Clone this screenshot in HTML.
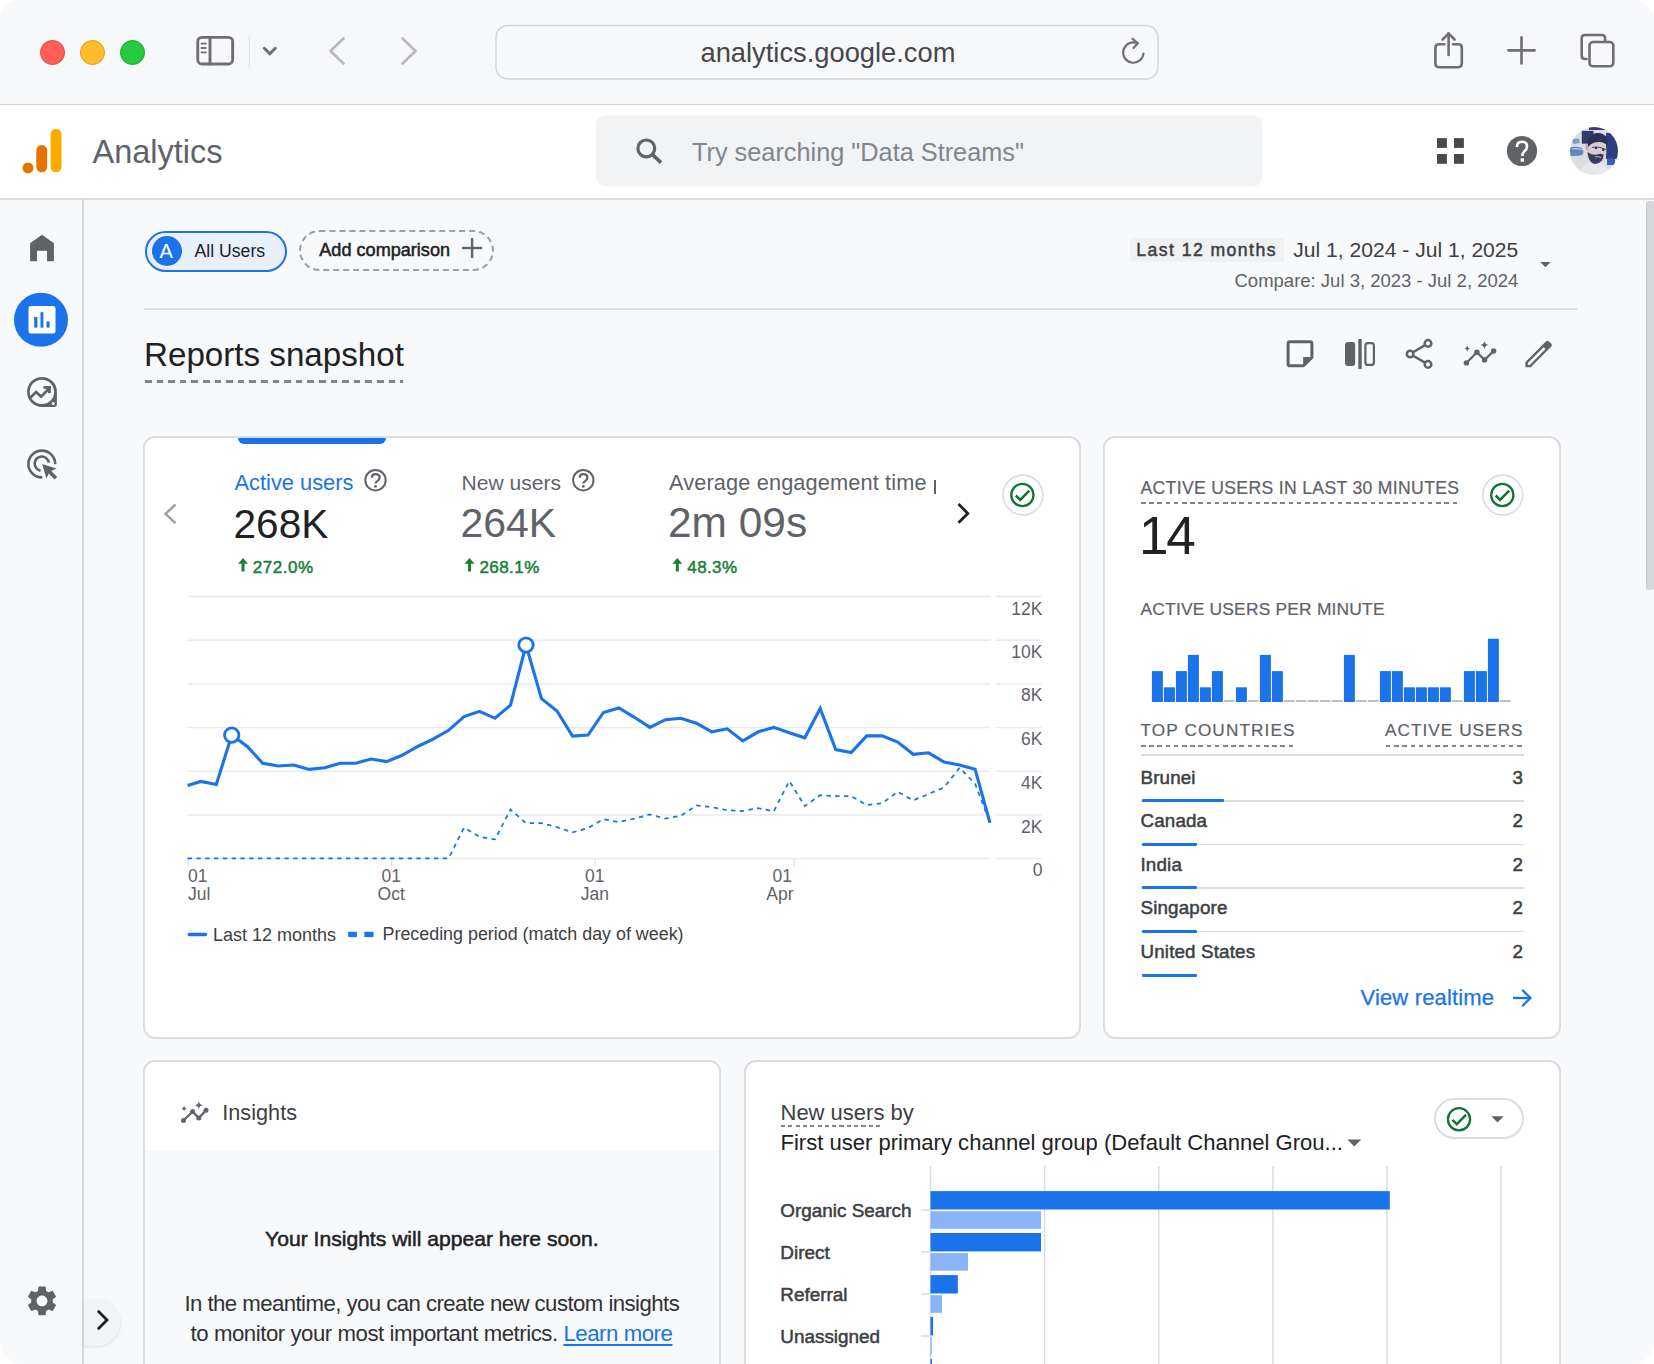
<!DOCTYPE html>
<html><head><meta charset="utf-8"><title>Analytics</title>
<style>
html,body{margin:0;padding:0;}
body{width:1654px;height:1364px;overflow:hidden;background:#ffffff;font-family:"Liberation Sans",sans-serif;position:relative;}
#win{position:absolute;left:0;top:0;width:1654px;height:1364px;border-radius:22px;overflow:hidden;background:#f8f9fa;}
.t{position:absolute;white-space:nowrap;}
svg{overflow:visible;}
</style></head><body>
<div id="win">
<div style="position:absolute;left:0px;top:0px;width:1654px;height:104px;background:#f7f8fa;"></div>
<div style="position:absolute;left:0px;top:104px;width:1654px;height:1px;background:#d4d5d8;"></div>
<div style="position:absolute;left:40px;top:40px;width:22.5px;height:22.5px;border-radius:50%;background:#ff5f57;border:0.75px solid #e2463f;"></div>
<div style="position:absolute;left:80px;top:40px;width:22.5px;height:22.5px;border-radius:50%;background:#febc2e;border:0.75px solid #e1a116;"></div>
<div style="position:absolute;left:120px;top:40px;width:22.5px;height:22.5px;border-radius:50%;background:#28c840;border:0.75px solid #12ac28;"></div>
<svg style="position:absolute;left:0;top:0" width="1654" height="104" viewBox="0 0 1654 104">
<g fill="none" stroke="#6e6e73" stroke-width="2.9" stroke-linecap="round" stroke-linejoin="round">
<rect x="197.75" y="37.35" width="34.9" height="26.7" rx="4.3"/>
<line x1="210" y1="37.5" x2="210" y2="64"/>
<line x1="201.5" y1="43.6" x2="205.8" y2="43.6" stroke-width="1.8"/>
<line x1="201.5" y1="48" x2="205.8" y2="48" stroke-width="1.8"/>
<line x1="201.5" y1="52.4" x2="205.8" y2="52.4" stroke-width="1.8"/>
<polyline points="264.3,48.3 269.8,53.8 275.3,48.3" stroke-width="3"/>
</g>
<line x1="249.3" y1="35" x2="249.3" y2="69" stroke="#e3e3e6" stroke-width="1.2"/>
<g fill="none" stroke="#b9b9bd" stroke-width="2.6" stroke-linecap="round" stroke-linejoin="round">
<polyline points="343.5,38.5 330.5,51 343.5,63.5"/>
<polyline points="402.5,38.5 415.5,51 402.5,63.5"/>
</g>
<rect x="496" y="25.5" width="662" height="53.5" rx="12" fill="#f7f8fa" stroke="#d3d4d7" stroke-width="1.5"/>
<g fill="none" stroke="#727276" stroke-width="2.2" stroke-linecap="round" stroke-linejoin="round">
<path d="M1143.5 53.5 A10.2 10.2 0 1 1 1137.5 43.2"/>
<polyline points="1132.5,38.8 1137.8,43.2 1133.5,48"/>
</g>
<g fill="none" stroke="#6e6e73" stroke-width="2.6" stroke-linecap="round" stroke-linejoin="round">
<path d="M1444.3 44.2 H1439 Q1435.4 44.2 1435.4 47.8 V63.6 Q1435.4 67.2 1439 67.2 H1458.2 Q1461.8 67.2 1461.8 63.6 V47.8 Q1461.8 44.2 1458.2 44.2 H1453"/>
<line x1="1448.6" y1="33.5" x2="1448.6" y2="55"/>
<polyline points="1442.5,39.6 1448.6,33.5 1454.7,39.6"/>
<line x1="1508.5" y1="50.4" x2="1534.5" y2="50.4"/>
<line x1="1521.5" y1="37.4" x2="1521.5" y2="63.4"/>
<path d="M1586.5 59 H1585 Q1581.7 59 1581.7 55.7 V38.3 Q1581.7 35 1585 35 H1601.8 Q1605.1 35 1605.1 38.3 V41.5"/>
<rect x="1589.5" y="42" width="23.8" height="24.3" rx="3.6"/>
</g>
</svg>
<div class="t" style="left:700.5px;top:38.69px;font-size:27.3px;line-height:27.3px;color:#47474a;">analytics.google.com</div>
<div style="position:absolute;left:0px;top:105px;width:1654px;height:93px;background:#ffffff;"></div>
<div style="position:absolute;left:0px;top:198px;width:1654px;height:1.5px;background:#dadce0;"></div>
<svg style="position:absolute;left:0;top:105px" width="1654" height="93" viewBox="0 105 1654 93">
<circle cx="28" cy="167.9" r="5.5" fill="#e37400"/>
<rect x="36.3" y="145" width="10.9" height="27.3" rx="5.45" fill="#e37400"/>
<rect x="50.6" y="128.8" width="10.9" height="43.5" rx="5.45" fill="#f9ab00"/>
<rect x="596" y="115.4" width="666" height="71" rx="9" fill="#f1f3f4"/>
<g fill="none" stroke="#5f6368" stroke-width="3.2" stroke-linecap="round">
<circle cx="646.3" cy="148.4" r="8.4"/>
<line x1="652.5" y1="154.6" x2="661" y2="162.6" stroke-linecap="butt" stroke-width="3.6"/>
</g>
<g fill="#474a4d">
<rect x="1437" y="138.1" width="9.9" height="9.8"/>
<rect x="1454" y="138.1" width="9.9" height="9.8"/>
<rect x="1437" y="154" width="9.9" height="9.8"/>
<rect x="1454" y="154" width="9.9" height="9.8"/>
</g>
<circle cx="1522" cy="151" r="15.1" fill="#5f6368"/>
<path d="M1516.9 147 Q1517 141.8 1522 141.8 Q1527 141.8 1527 146.4 Q1527 149 1524.6 151 Q1522.3 153 1522.3 156" fill="none" stroke="#fff" stroke-width="2.6"/>
<rect x="1520.6" y="158.3" width="3.4" height="3.4" fill="#fff"/>
</svg>
<div class="t" style="left:92.5px;top:136.49px;font-size:32.5px;line-height:32.5px;color:#5f6368;">Analytics</div>
<div class="t" style="left:692.0px;top:139.58px;font-size:25.3px;line-height:25.3px;color:#80868b;">Try searching "Data Streams"</div>
<svg style="position:absolute;left:1570px;top:127px" width="48" height="48" viewBox="0 0 48 48">
<defs><clipPath id="av"><circle cx="24" cy="24" r="24"/></clipPath>
<filter id="blur" x="-10%" y="-10%" width="120%" height="120%"><feGaussianBlur stdDeviation="0.7"/></filter></defs>
<g clip-path="url(#av)"><g filter="url(#blur)">
<rect x="-2" y="-2" width="52" height="52" fill="#dcdee3"/>
<rect x="19" y="-2" width="17" height="5" fill="#343d72"/>
<rect x="11.8" y="3.9" width="11.7" height="12.8" fill="#303a6c"/>
<rect x="36" y="5.9" width="13" height="26" fill="#2d3c80"/>
<rect x="37" y="32" width="8" height="6" fill="#3a5fb0"/>
<path d="M0 20.5 Q6 19 11.5 21 Q13.5 23 13.5 25 L12.5 28 Q8 29 0 29Z" fill="#6088c0"/>
<path d="M2 22 Q7 21 12 23" stroke="#b9c9e2" stroke-width="1.2" fill="none"/>
<path d="M1.5 12 L9 11.5 L10 16 L3 17Z" fill="#7f9bc8"/>
<path d="M10 48 Q12 38 20 35 L30 36 Q38 39 40 48Z" fill="#e6e8ec"/>
<path d="M16.5 24 Q16 15 24 14.5 Q33 14 36 19 Q37.5 27 34 33 Q30 37 25 36 Q18 34 16.5 24Z" fill="#d8cdca"/>
<path d="M15.4 17 Q17.8 16.8 18 20 L17.8 24 Q15.6 23.5 15.4 20Z" fill="#c9a9a8"/>
<path d="M17.8 18 Q17 9 25 6.3 Q34 5 37.5 12 Q38.5 16 37 18.5 Q34 14.5 28 15 Q21 15.5 18.5 20Z" fill="#2a3158"/>
<path d="M22 20.5 Q27 19 36 22.5" stroke="#4a4f70" stroke-width="1.1" fill="none"/>
<circle cx="26" cy="21" r="1.2" fill="#2a2f52"/><circle cx="33.2" cy="23" r="1.2" fill="#2a2f52"/>
<path d="M17.5 25 Q18 34 23 36.5 Q28 38 32 33.5 Q34 30 33.5 27.5 Q30 26 27 27.5 Q24 28 21 27 Q19 26 17.5 25Z" fill="#3b3e60"/>
<path d="M25 30 Q28 29 31 30.5" stroke="#cfc3c2" stroke-width="0.9" fill="none"/>
</g></g></svg>
<div style="position:absolute;left:82px;top:199px;width:2px;height:1165px;background:#d7d8db;"></div>
<svg style="position:absolute;left:0;top:199px" width="84" height="1165" viewBox="0 199 84 1165">
<path d="M30.1 261.3 V243.3 L42 234.7 L53.9 243.3 V261.3 H47 V250.8 H37 V261.3 Z" fill="#5f6368"/>
<circle cx="41" cy="319.8" r="27" fill="#1a73e8"/>
<rect x="28.5" y="306" width="27" height="27.5" rx="2.6" fill="#fff"/>
<rect x="34.2" y="316.9" width="3.2" height="10.7" fill="#1a73e8"/>
<rect x="40.5" y="312.2" width="2.9" height="15.4" fill="#1a73e8"/>
<rect x="46.5" y="321.4" width="3.1" height="6.2" fill="#1a73e8"/>
<path d="M27.1 391.9 A14.8 14.8 0 0 1 56.9 391.9 V404.2 Q56.9 406.9 54.2 406.9 H41.9 A14.8 14.8 0 0 1 27.1 391.9 Z" fill="#5f6368"/>
<circle cx="41.9" cy="391.9" r="12.2" fill="#f8f9fa"/>
<polyline points="30.3,397.8 36.1,392 41.1,396.6 48.6,389" fill="none" stroke="#5f6368" stroke-width="2.7"/>
<polygon points="43.4,386.2 50.6,386.2 50.6,393.1" fill="#5f6368"/>
<rect x="43.4" y="386.2" width="7.2" height="2.6" fill="#5f6368"/>
<rect x="48" y="386.2" width="2.6" height="6.9" fill="#5f6368"/>
<circle cx="53.2" cy="403.4" r="1.5" fill="#fff"/>
<g fill="none" stroke="#5f6368" stroke-width="2.6">
<path d="M55.2 464.3 A13.4 13.4 0 1 0 42.3 477.4"/>
<path d="M48.8 462.6 A7.1 7.1 0 1 0 40.6 470.6"/>
</g>
<path d="M42.2 464.1 L56.5 468.4 L51.3 471 L57.2 476.9 L54.6 479.5 L48.7 473.6 L46.4 478.6 Z" fill="#5f6368"/>
<path transform="translate(24 1282.9) scale(1.5)" fill="#5f6368" d="M19.14 12.94c.04-.3.06-.61.06-.94 0-.32-.02-.64-.07-.94l2.03-1.58c.18-.14.23-.41.12-.61l-1.92-3.32c-.12-.22-.37-.29-.59-.22l-2.39.96c-.5-.38-1.030-.7-1.62-.94l-.36-2.54c-.04-.24-.24-.41-.48-.41h-3.84c-.24 0-.43.17-.47.41l-.36 2.54c-.59.24-1.13.57-1.62.94l-2.39-.96c-.22-.08-.47 0-.59.22L2.74 8.87c-.12.21-.08.47.12.61l2.03 1.58c-.05.3-.09.63-.09.94s.02.64.07.94l-2.03 1.58c-.18.14-.23.41-.12.61l1.92 3.32c.12.22.37.29.59.22l2.39-.96c.5.38 1.03.7 1.62.94l.36 2.54c.05.24.24.41.48.41h3.840c.24 0 .44-.17.47-.41l.36-2.54c.59-.24 1.13-.56 1.62-.94l2.39.96c.22.08.47 0 .59-.22l1.92-3.32c.12-.22.07-.47-.12-.61l-2.01-1.58zM12 15.6c-1.98 0-3.6-1.62-3.6-3.6s1.62-3.6 3.6-3.6 3.6 1.62 3.6 3.6-1.62 3.6-3.6 3.6z"/>
</svg>
<div style="position:absolute;left:84px;top:1299px;width:36px;height:47px;background:#f1f3f4;border-radius:0 23px 23px 0;box-shadow:0 1px 3px rgba(60,64,67,0.15);"></div>
<svg style="position:absolute;left:84px;top:1299px" width="40" height="50" viewBox="84 1299 40 50">
<polyline points="97.8,1310.8 107,1320 97.8,1329.2" fill="none" stroke="#202124" stroke-width="2.8"/>
</svg>
<div style="position:absolute;left:144.5px;top:230.5px;width:138.5px;height:37px;border:2px solid #1a73e8;border-radius:21px;background:#e8f0fe;"></div>
<div style="position:absolute;left:152px;top:236px;width:30px;height:30px;border-radius:50%;background:#1a73e8;"></div>
<div class="t" style="left:159.5px;top:241.07px;font-size:20px;line-height:20px;color:#ffffff;">A</div>
<div class="t" style="left:194.5px;top:242.76px;font-size:17.65px;line-height:17.65px;color:#202124;">All Users</div>
<div style="position:absolute;left:299.3px;top:229.8px;width:191px;height:37.5px;border:2px dashed #9aa0a6;border-radius:21px;"></div>
<div class="t" style="left:319.3px;top:241.28px;font-size:18.1px;line-height:18.1px;color:#202124;-webkit-text-stroke:0.5px #202124;">Add comparison</div>
<svg style="position:absolute;left:455px;top:232px" width="36" height="36" viewBox="455 232 36 36">
<g stroke="#5f6368" stroke-width="2.4"><line x1="462" y1="248" x2="482.2" y2="248"/><line x1="472.1" y1="238" x2="472.1" y2="258"/></g></svg>
<div style="position:absolute;left:1130px;top:237.8px;width:153.5px;height:24px;background:#f0f1f3;border-radius:2px;"></div>
<div class="t" style="left:1136.3px;top:242.00px;font-size:17.6px;line-height:17.6px;color:#3c4043;-webkit-text-stroke:0.5px #3c4043;letter-spacing:1.45px;">Last 12 months</div>
<div class="t" style="left:1293.3px;top:238.96px;font-size:21.08px;line-height:21.08px;color:#3c4043;">Jul 1, 2024 - Jul 1, 2025</div>
<div class="t" style="left:1234.5px;top:272.03px;font-size:18.51px;line-height:18.51px;color:#5f6368;">Compare: Jul 3, 2023 - Jul 2, 2024</div>
<svg style="position:absolute;left:1535px;top:255px" width="20" height="16" viewBox="1535 255 20 16">
<polygon points="1540.2,262 1550.6,262 1545.4,267.2" fill="#5f6368"/></svg>
<div style="position:absolute;left:144px;top:308px;width:1433px;height:1.5px;background:#dadce0;"></div>
<div class="t" style="left:144.0px;top:337.92px;font-size:33.17px;line-height:33.17px;color:#202124;">Reports snapshot</div>
<div style="position:absolute;left:145px;top:380px;width:258px;height:2.5px;background:repeating-linear-gradient(90deg,#80868b 0 6.5px,transparent 6.5px 11.6px);"></div>
<svg style="position:absolute;left:1270px;top:330px" width="300" height="50" viewBox="1270 330 300 50">
<g fill="none" stroke="#5f6368" stroke-width="3" stroke-linejoin="round">
<path d="M1290 341.7 H1310 Q1311.9 341.7 1311.9 343.6 V357.5 L1303.5 365.8 H1290 Q1288.1 365.8 1288.1 363.9 V343.6 Q1288.1 341.7 1290 341.7 Z"/>
</g>
<polygon points="1303.2,357.1 1312.8,357.1 1303.2,366.7" fill="#5f6368"/>
<rect x="1345" y="342" width="10.2" height="24" rx="3" fill="#5f6368"/>
<rect x="1358.3" y="339" width="3.4" height="30" fill="#5f6368"/>
<rect x="1365.4" y="343.1" width="8.5" height="21.8" rx="2.5" fill="none" stroke="#5f6368" stroke-width="2.2"/>
<g stroke="#5f6368" stroke-width="2.5" fill="none">
<line x1="1428" y1="343.4" x2="1410.1" y2="354"/>
<line x1="1410.1" y1="354" x2="1428" y2="364.4"/>
<circle cx="1428" cy="343.4" r="3.3" fill="#f8f9fa"/>
<circle cx="1410.1" cy="354" r="3.3" fill="#f8f9fa"/>
<circle cx="1428" cy="364.4" r="3.3" fill="#f8f9fa"/>
</g>
<g fill="#5f6368">
<polyline points="1466.4,362.9 1476.9,352.3 1484.6,359.9 1493.6,351" fill="none" stroke="#5f6368" stroke-width="2.2"/>
<circle cx="1466.4" cy="362.9" r="2.7"/><circle cx="1476.9" cy="352.3" r="2.7"/><circle cx="1484.6" cy="359.9" r="2.7"/><circle cx="1493.6" cy="351" r="2.7"/>
<path d="M1484.4 341 Q1485 344.4 1488.4 345 Q1485 345.6 1484.4 349 Q1483.8 345.6 1480.4 345 Q1483.8 344.4 1484.4 341Z"/>
<path d="M1467.3 345.3 Q1467.7 348.2 1470.6 348.6 Q1467.7 349 1467.3 351.9 Q1466.9 349 1464 348.6 Q1466.9 348.2 1467.3 345.3Z"/>
</g>
<path transform="translate(1520.1 372.6) scale(0.0386)" fill="#5f6368" fill-rule="evenodd" d="M140-140v-135.38l527.62-527.39q9.07-8.24 20.03-12.73 10.97-4.5 23-4.5t23.3 4.27q11.28 4.27 19.970 13.58l48.85 49.46q9.31 8.69 13.27 20 3.96 11.31 3.96 22.62 0 12.07-4.12 23.03-4.12 10.97-13.11 20.04L275.38-140H140Z M200-200h50.46l409.46-409.46-50.46-50.46L200-250.46V-200Z"/>
</svg>
<div style="position:absolute;left:143px;top:436px;width:934px;height:599px;border:2px solid #dadce0;border-radius:12px;background:#fff;"></div>
<div style="position:absolute;left:238px;top:438px;width:148px;height:6px;background:#1a73e8;border-radius:0 0 6px 6px;"></div>
<div class="t" style="left:234.5px;top:471.50px;font-size:21.85px;line-height:21.85px;color:#1a73e8;">Active users</div>
<div class="t" style="left:461.5px;top:472.16px;font-size:21.07px;line-height:21.07px;color:#5f6368;">New users</div>
<div class="t" style="left:669.0px;top:471.57px;font-size:21.77px;line-height:21.77px;color:#5f6368;letter-spacing:0.12px;">Average engagement time</div>
<div style="position:absolute;left:934.2px;top:480px;width:2.1px;height:14px;background:#5f6368;"></div>
<div class="t" style="left:233.5px;top:503.64px;font-size:40.59px;line-height:40.59px;color:#202124;">268K</div>
<div class="t" style="left:460.5px;top:503.31px;font-size:40.98px;line-height:40.98px;color:#5f6368;">264K</div>
<div class="t" style="left:668.0px;top:502.07px;font-size:42.45px;line-height:42.45px;color:#5f6368;">2m 09s</div>
<div class="t" style="left:252.8px;top:559.01px;font-size:17px;line-height:17px;color:#188038;-webkit-text-stroke:0.5px #188038;letter-spacing:0.52px;">272.0%</div>
<div class="t" style="left:479.5px;top:559.01px;font-size:17px;line-height:17px;color:#188038;-webkit-text-stroke:0.5px #188038;letter-spacing:0.42px;">268.1%</div>
<div class="t" style="left:687.3px;top:559.01px;font-size:17px;line-height:17px;color:#188038;-webkit-text-stroke:0.5px #188038;letter-spacing:0.38px;">48.3%</div>
<svg style="position:absolute;left:143px;top:436px" width="940" height="603" viewBox="143 436 940 603">
<circle cx="375.5" cy="480.2" r="10.2" fill="none" stroke="#5f6368" stroke-width="2"/>
<path d="M371.9 477.59999999999997 Q372.1 474.2 375.5 474.2 Q379.6 474.2 379.6 477.59999999999997 Q379.6 479.9 377.1 481.4 Q375.5 482.4 375.5 483.59999999999997" fill="none" stroke="#5f6368" stroke-width="2.2"/>
<circle cx="375.5" cy="486.4" r="1.4" fill="#5f6368"/>
<circle cx="583.3" cy="480.2" r="10.2" fill="none" stroke="#5f6368" stroke-width="2"/>
<path d="M579.6999999999999 477.59999999999997 Q579.9 474.2 583.3 474.2 Q587.4 474.2 587.4 477.59999999999997 Q587.4 479.9 584.9 481.4 Q583.3 482.4 583.3 483.59999999999997" fill="none" stroke="#5f6368" stroke-width="2.2"/>
<circle cx="583.3" cy="486.4" r="1.4" fill="#5f6368"/>
<circle cx="1022.9" cy="495" r="19.9" fill="#fff" stroke="#dadce0" stroke-width="1.6"/><circle cx="1022.4" cy="495" r="11.1" fill="none" stroke="#137333" stroke-width="2.3"/>
<polyline points="1015.8,495.5 1020.1999999999999,499.9 1029.3,490.6" fill="none" stroke="#137333" stroke-width="2.5"/>
<polyline points="175.5,504.5 165.5,513.8 175.5,523.1" fill="none" stroke="#9aa0a6" stroke-width="2.4"/>
<polyline points="958.5,504 967.8,513.4 958.5,522.8" fill="none" stroke="#202124" stroke-width="2.8"/>
<polygon points="243,558 248,563.8 244.5,563.8 244.5,571.6 241.5,571.6 241.5,563.8 238,563.8" fill="#188038"/>
<polygon points="469.5,558 474.5,563.8 471.0,563.8 471.0,571.6 468.0,571.6 468.0,563.8 464.5,563.8" fill="#188038"/>
<polygon points="677.3,558 682.3,563.8 678.8,563.8 678.8,571.6 675.8,571.6 675.8,563.8 672.3,563.8" fill="#188038"/>
</svg>
<svg style="position:absolute;left:143px;top:436px" width="940" height="603" viewBox="143 436 940 603"><rect x="187.5" y="595.75" width="803" height="1.5" fill="#e8eaed"/><rect x="996" y="595.75" width="45.5" height="1.5" fill="#e8eaed"/><rect x="187.5" y="639.43" width="803" height="1.5" fill="#e8eaed"/><rect x="996" y="639.43" width="45.5" height="1.5" fill="#e8eaed"/><rect x="187.5" y="683.11" width="803" height="1.5" fill="#e8eaed"/><rect x="996" y="683.11" width="45.5" height="1.5" fill="#e8eaed"/><rect x="187.5" y="726.79" width="803" height="1.5" fill="#e8eaed"/><rect x="996" y="726.79" width="45.5" height="1.5" fill="#e8eaed"/><rect x="187.5" y="770.47" width="803" height="1.5" fill="#e8eaed"/><rect x="996" y="770.47" width="45.5" height="1.5" fill="#e8eaed"/><rect x="187.5" y="814.15" width="803" height="1.5" fill="#e8eaed"/><rect x="996" y="814.15" width="45.5" height="1.5" fill="#e8eaed"/><rect x="187.5" y="857.83" width="803" height="1.5" fill="#e8eaed"/><rect x="996" y="857.83" width="45.5" height="1.5" fill="#e8eaed"/><rect x="187.6" y="858.5" width="1.2" height="7.5" fill="#dadce0"/><rect x="391.1" y="858.5" width="1.2" height="7.5" fill="#dadce0"/><rect x="594.6" y="858.5" width="1.2" height="7.5" fill="#dadce0"/><rect x="793.6" y="858.5" width="1.2" height="7.5" fill="#dadce0"/><polyline points="187.6,858.3 200.8,858.3 216.3,858.3 231.8,858.3 247.3,858.3 262.7,858.3 278.2,858.3 293.7,858.3 309.2,858.3 324.7,858.3 340.2,858.3 355.7,858.3 371.1,858.3 386.6,858.3 402.1,858.3 417.6,858.3 433.1,858.3 448.6,858.3 464.1,827.5 479.5,836.8 495.0,839.4 510.5,809.5 526.0,823.2 541.5,823.2 557.0,827.1 572.5,832.4 588.0,828.0 603.4,819.2 618.9,822.1 634.4,818.6 649.9,814.5 665.4,818.6 680.9,815.8 696.4,805.4 711.8,807.1 727.3,810.3 742.8,811.0 758.3,808.2 773.8,811.3 789.3,781.0 804.8,806.1 820.2,795.2 835.7,796.1 851.2,796.1 866.7,805.1 882.2,803.3 897.7,791.7 913.2,800.4 928.6,793.9 944.1,787.4 959.6,767.8 975.1,783.7 990.0,822.9" fill="none" stroke="#1a73e8" stroke-width="1.75" stroke-dasharray="4.4 4.4"/><polyline points="187.6,785.4 200.8,781.4 216.3,784.5 231.8,735.1 247.3,746.5 262.7,763.2 278.2,766.0 293.7,765.0 309.2,769.4 324.7,767.8 340.2,763.2 355.7,763.2 371.1,759.0 386.6,761.6 402.1,755.3 417.6,746.5 433.1,739.1 448.6,730.3 464.1,716.6 479.5,711.3 495.0,718.3 510.5,705.1 526.0,645.0 541.5,698.6 557.0,711.0 572.5,736.1 588.0,735.1 603.4,712.5 618.9,707.9 634.4,717.3 649.9,727.4 665.4,719.7 680.9,718.3 696.4,723.2 711.8,731.8 727.3,728.8 742.8,740.9 758.3,731.8 773.8,727.4 789.3,732.7 804.8,737.8 820.2,708.5 835.7,749.6 851.2,752.5 866.7,735.9 882.2,735.9 897.7,742.1 913.2,754.3 928.6,752.8 944.1,762.0 959.6,764.9 975.1,769.2 990.0,822.9" fill="none" stroke="#1a73e8" stroke-width="3.1" stroke-linejoin="miter"/><circle cx="231.7" cy="735.1" r="7.2" fill="#fff" stroke="#1a73e8" stroke-width="2.8"/><circle cx="526" cy="645" r="7.2" fill="#fff" stroke="#1a73e8" stroke-width="2.8"/><line x1="189.2" y1="934.5" x2="205.5" y2="934.5" stroke="#1a73e8" stroke-width="3.4" stroke-linecap="round"/><rect x="348.2" y="931.8" width="8.7" height="5.3" fill="#1a73e8"/><rect x="364.3" y="931.8" width="9.2" height="5.3" fill="#1a73e8"/></svg>
<div class="t" style="right:611.5px;top:600.69px;font-size:17.5px;line-height:17.5px;color:#5f6368;">12K</div>
<div class="t" style="right:611.5px;top:643.89px;font-size:17.5px;line-height:17.5px;color:#5f6368;">10K</div>
<div class="t" style="right:611.5px;top:687.39px;font-size:17.5px;line-height:17.5px;color:#5f6368;">8K</div>
<div class="t" style="right:611.5px;top:731.39px;font-size:17.5px;line-height:17.5px;color:#5f6368;">6K</div>
<div class="t" style="right:611.5px;top:775.09px;font-size:17.5px;line-height:17.5px;color:#5f6368;">4K</div>
<div class="t" style="right:611.5px;top:819.09px;font-size:17.5px;line-height:17.5px;color:#5f6368;">2K</div>
<div class="t" style="right:611.5px;top:862.19px;font-size:17.5px;line-height:17.5px;color:#5f6368;">0</div>
<div class="t" style="left:188.0px;top:867.79px;font-size:17.5px;line-height:17.5px;color:#5f6368;">01</div>
<div class="t" style="left:188.0px;top:886.29px;font-size:17.5px;line-height:17.5px;color:#5f6368;">Jul</div>
<div class="t" style="left:-108.8px;width:1000px;text-align:center;top:867.79px;font-size:17.5px;line-height:17.5px;color:#5f6368;">01</div>
<div class="t" style="left:-108.8px;width:1000px;text-align:center;top:886.29px;font-size:17.5px;line-height:17.5px;color:#5f6368;">Oct</div>
<div class="t" style="left:94.8px;width:1000px;text-align:center;top:867.79px;font-size:17.5px;line-height:17.5px;color:#5f6368;">01</div>
<div class="t" style="left:94.8px;width:1000px;text-align:center;top:886.29px;font-size:17.5px;line-height:17.5px;color:#5f6368;">Jan</div>
<div class="t" style="right:862.0px;top:867.79px;font-size:17.5px;line-height:17.5px;color:#5f6368;">01</div>
<div class="t" style="right:860.5px;top:886.29px;font-size:17.5px;line-height:17.5px;color:#5f6368;">Apr</div>
<div class="t" style="left:213.0px;top:925.67px;font-size:17.99px;line-height:17.99px;color:#3c4043;">Last 12 months</div>
<div class="t" style="left:382.5px;top:925.76px;font-size:17.89px;line-height:17.89px;color:#3c4043;">Preceding period (match day of week)</div>
<div style="position:absolute;left:1103px;top:436px;width:454px;height:599px;border:2px solid #dadce0;border-radius:12px;background:#fff;"></div>
<div class="t" style="left:1140.5px;top:479.60px;font-size:17.6px;line-height:17.6px;color:#5f6368;-webkit-text-stroke:0.22px #5f6368;letter-spacing:0.33px;">ACTIVE USERS IN LAST 30 MINUTES</div>
<div style="position:absolute;left:1141px;top:502px;width:317px;height:2px;background:repeating-linear-gradient(90deg,#80868b 0 4.5px,transparent 4.5px 8.2px);"></div>
<div class="t" style="left:1139.0px;top:509.14px;font-size:53px;line-height:53px;color:#202124;letter-spacing:-2.2px;">14</div>
<div class="t" style="left:1140.5px;top:601.37px;font-size:17.4px;line-height:17.4px;color:#5f6368;-webkit-text-stroke:0.22px #5f6368;letter-spacing:0.2px;">ACTIVE USERS PER MINUTE</div>
<svg style="position:absolute;left:1103px;top:436px" width="460" height="603" viewBox="1103 436 460 603"><rect x="1151.9" y="671.1" width="11" height="30.9" fill="#1a73e8"/><rect x="1163.9" y="687.3" width="11" height="14.7" fill="#1a73e8"/><rect x="1175.9" y="671.1" width="11" height="30.9" fill="#1a73e8"/><rect x="1187.9" y="654.9" width="11" height="47.1" fill="#1a73e8"/><rect x="1199.9" y="687.3" width="11" height="14.7" fill="#1a73e8"/><rect x="1211.9" y="671.1" width="11" height="30.9" fill="#1a73e8"/><rect x="1223.9" y="700" width="10.8" height="2" fill="#bdc1c6"/><rect x="1235.9" y="687.3" width="11" height="14.7" fill="#1a73e8"/><rect x="1247.9" y="700" width="10.8" height="2" fill="#bdc1c6"/><rect x="1259.9" y="654.9" width="11" height="47.1" fill="#1a73e8"/><rect x="1271.9" y="671.1" width="11" height="30.9" fill="#1a73e8"/><rect x="1283.9" y="700" width="10.8" height="2" fill="#bdc1c6"/><rect x="1295.9" y="700" width="10.8" height="2" fill="#bdc1c6"/><rect x="1307.9" y="700" width="10.8" height="2" fill="#bdc1c6"/><rect x="1319.9" y="700" width="10.8" height="2" fill="#bdc1c6"/><rect x="1331.9" y="700" width="10.8" height="2" fill="#bdc1c6"/><rect x="1343.9" y="654.9" width="11" height="47.1" fill="#1a73e8"/><rect x="1355.9" y="700" width="10.8" height="2" fill="#bdc1c6"/><rect x="1367.9" y="700" width="10.8" height="2" fill="#bdc1c6"/><rect x="1379.9" y="671.1" width="11" height="30.9" fill="#1a73e8"/><rect x="1391.9" y="671.1" width="11" height="30.9" fill="#1a73e8"/><rect x="1403.9" y="687.3" width="11" height="14.7" fill="#1a73e8"/><rect x="1415.9" y="687.3" width="11" height="14.7" fill="#1a73e8"/><rect x="1427.9" y="687.3" width="11" height="14.7" fill="#1a73e8"/><rect x="1439.9" y="687.3" width="11" height="14.7" fill="#1a73e8"/><rect x="1451.9" y="700" width="10.8" height="2" fill="#bdc1c6"/><rect x="1463.9" y="671.1" width="11" height="30.9" fill="#1a73e8"/><rect x="1475.9" y="671.1" width="11" height="30.9" fill="#1a73e8"/><rect x="1487.9" y="638.7" width="11" height="63.3" fill="#1a73e8"/><rect x="1499.9" y="700" width="10.8" height="2" fill="#bdc1c6"/><circle cx="1502.8" cy="495" r="19.9" fill="#fff" stroke="#dadce0" stroke-width="1.6"/><circle cx="1502.3" cy="495" r="11.1" fill="none" stroke="#137333" stroke-width="2.3"/>
<polyline points="1495.7,495.5 1500.1,499.9 1509.2,490.6" fill="none" stroke="#137333" stroke-width="2.5"/></svg>
<div class="t" style="left:1140.5px;top:722.44px;font-size:17.2px;line-height:17.2px;color:#5f6368;-webkit-text-stroke:0.22px #5f6368;letter-spacing:1.1px;">TOP COUNTRIES</div>
<div class="t" style="right:130.4px;top:722.44px;font-size:17.2px;line-height:17.2px;color:#5f6368;-webkit-text-stroke:0.22px #5f6368;letter-spacing:1.05px;">ACTIVE USERS</div>
<div style="position:absolute;left:1141px;top:744.5px;width:155px;height:2px;background:repeating-linear-gradient(90deg,#80868b 0 4.5px,transparent 4.5px 8.2px);"></div>
<div style="position:absolute;left:1385.5px;top:744.5px;width:138px;height:2px;background:repeating-linear-gradient(90deg,#80868b 0 4.5px,transparent 4.5px 8.2px);"></div>
<div style="position:absolute;left:1141px;top:754px;width:383px;height:1.5px;background:#dadce0;"></div>
<div class="t" style="left:1140.5px;top:768.79px;font-size:18.8px;line-height:18.8px;color:#3c4043;-webkit-text-stroke:0.5px #3c4043;letter-spacing:0.15px;">Brunei</div>
<div class="t" style="right:131.0px;top:768.79px;font-size:18.8px;line-height:18.8px;color:#3c4043;-webkit-text-stroke:0.5px #3c4043;">3</div>
<div style="position:absolute;left:1141px;top:800.2px;width:383px;height:1.5px;background:#dadce0;"></div>
<div style="position:absolute;left:1141.8px;top:799.0px;width:82.40000000000009px;height:3px;background:#1a73e8;border-radius:1px;"></div>
<div class="t" style="left:1140.5px;top:812.49px;font-size:18.8px;line-height:18.8px;color:#3c4043;-webkit-text-stroke:0.5px #3c4043;letter-spacing:0.15px;">Canada</div>
<div class="t" style="right:131.0px;top:812.49px;font-size:18.8px;line-height:18.8px;color:#3c4043;-webkit-text-stroke:0.5px #3c4043;">2</div>
<div style="position:absolute;left:1141px;top:843.9px;width:383px;height:1.5px;background:#dadce0;"></div>
<div style="position:absolute;left:1141.8px;top:842.6999999999999px;width:55.40000000000009px;height:3px;background:#1a73e8;border-radius:1px;"></div>
<div class="t" style="left:1140.5px;top:855.99px;font-size:18.8px;line-height:18.8px;color:#3c4043;-webkit-text-stroke:0.5px #3c4043;letter-spacing:0.15px;">India</div>
<div class="t" style="right:131.0px;top:855.99px;font-size:18.8px;line-height:18.8px;color:#3c4043;-webkit-text-stroke:0.5px #3c4043;">2</div>
<div style="position:absolute;left:1141px;top:887.4px;width:383px;height:1.5px;background:#dadce0;"></div>
<div style="position:absolute;left:1141.8px;top:886.1999999999999px;width:55.40000000000009px;height:3px;background:#1a73e8;border-radius:1px;"></div>
<div class="t" style="left:1140.5px;top:899.49px;font-size:18.8px;line-height:18.8px;color:#3c4043;-webkit-text-stroke:0.5px #3c4043;letter-spacing:0.15px;">Singapore</div>
<div class="t" style="right:131.0px;top:899.49px;font-size:18.8px;line-height:18.8px;color:#3c4043;-webkit-text-stroke:0.5px #3c4043;">2</div>
<div style="position:absolute;left:1141px;top:930.9px;width:383px;height:1.5px;background:#dadce0;"></div>
<div style="position:absolute;left:1141.8px;top:929.6999999999999px;width:55.40000000000009px;height:3px;background:#1a73e8;border-radius:1px;"></div>
<div class="t" style="left:1140.5px;top:943.29px;font-size:18.8px;line-height:18.8px;color:#3c4043;-webkit-text-stroke:0.5px #3c4043;letter-spacing:0.15px;">United States</div>
<div class="t" style="right:131.0px;top:943.29px;font-size:18.8px;line-height:18.8px;color:#3c4043;-webkit-text-stroke:0.5px #3c4043;">2</div>
<div style="position:absolute;left:1141.8px;top:973.5px;width:55.40000000000009px;height:3px;background:#1a73e8;border-radius:1px;"></div>
<div class="t" style="left:1360.5px;top:986.58px;font-size:22.0px;line-height:22.0px;color:#1a73e8;letter-spacing:0.15px;-webkit-text-stroke:0.25px #1a73e8;">View realtime</div>
<svg style="position:absolute;left:1505px;top:985px" width="32" height="26" viewBox="1505 985 32 26">
<g fill="none" stroke="#1a73e8" stroke-width="2.3"><line x1="1513" y1="998" x2="1530" y2="998"/><polyline points="1522.3,989.9 1530.4,998 1522.3,1006.1"/></g></svg>
<div style="position:absolute;left:143px;top:1060.3px;width:574px;height:400px;border:2px solid #dadce0;border-radius:12px;background:#f8f9fa;overflow:hidden;"><div style="height:89px;background:#fff;"></div></div>
<svg style="position:absolute;left:175px;top:1095px" width="40" height="35" viewBox="175 1095 40 35">
<g fill="#62666a">
<polyline points="183.5,1120.5 192.6,1111.6 198.8,1118.1 206,1110.2" fill="none" stroke="#62666a" stroke-width="2.3"/>
<circle cx="183.5" cy="1120.5" r="2.5"/><circle cx="192.6" cy="1111.6" r="2.5"/><circle cx="198.8" cy="1118.1" r="2.5"/><circle cx="206" cy="1110.2" r="2.5"/>
<path d="M198.8 1101.2 Q199.4 1104.6 202.8 1105.2 Q199.4 1105.8 198.8 1109.2 Q198.2 1105.8 194.8 1105.2 Q198.2 1104.6 198.8 1101.2Z"/>
<path d="M184.1 1105.7 Q184.5 1108.1 186.9 1108.5 Q184.5 1108.9 184.1 1111.3 Q183.7 1108.9 181.3 1108.5 Q183.7 1108.1 184.1 1105.7Z"/>
</g></svg>
<div class="t" style="left:222.3px;top:1102.15px;font-size:21.68px;line-height:21.68px;color:#3c4043;">Insights</div>
<div class="t" style="left:-68.2px;width:1000px;text-align:center;top:1228.14px;font-size:21.1px;line-height:21.1px;color:#202124;-webkit-text-stroke:0.5px #202124;">Your Insights will appear here soon.</div>
<div class="t" style="left:-68.2px;width:1000px;text-align:center;top:1293.21px;font-size:22.2px;line-height:22.2px;color:#303134;letter-spacing:-0.55px;">In the meantime, you can create new custom insights</div>
<div class="t" style="left:-68.5px;width:1000px;text-align:center;top:1323.21px;font-size:22.2px;line-height:22.2px;color:#303134;letter-spacing:-0.45px;">to monitor your most important metrics.&nbsp;<span style="color:#1a73e8;text-decoration:underline;text-underline-offset:3px;">Learn more</span></div>
<div style="position:absolute;left:744px;top:1060.3px;width:813px;height:400px;border:2px solid #dadce0;border-radius:12px;background:#fff;"></div>
<div class="t" style="left:780.5px;top:1102.18px;font-size:22.0px;line-height:22.0px;color:#3c4043;">New users by</div>
<div style="position:absolute;left:781px;top:1124.8px;width:101px;height:2px;background:repeating-linear-gradient(90deg,#80868b 0 4.2px,transparent 4.2px 7.3px);"></div>
<div class="t" style="left:780.5px;top:1131.93px;font-size:22.05px;line-height:22.05px;color:#202124;">First user primary channel group (Default Channel Grou...</div>
<div style="position:absolute;left:1434px;top:1098.2px;width:85.5px;height:37px;border:2px solid #dadce0;border-radius:21px;"></div>
<svg style="position:absolute;left:744px;top:1061px" width="820" height="303" viewBox="744 1061 820 303"><rect x="929.75" y="1166" width="1.5" height="200" fill="#dadce0"/><rect x="1043.85" y="1166" width="1.5" height="200" fill="#dadce0"/><rect x="1158.05" y="1166" width="1.5" height="200" fill="#dadce0"/><rect x="1272.25" y="1166" width="1.5" height="200" fill="#dadce0"/><rect x="1386.25" y="1166" width="1.5" height="200" fill="#dadce0"/><rect x="1500.25" y="1166" width="1.5" height="200" fill="#dadce0"/><rect x="930.5" y="1191.1" width="459.3" height="18.4" fill="#1a73e8"/><rect x="930.5" y="1211.2" width="110.5" height="17.6" fill="#8ab4f8"/><rect x="930.5" y="1233.0" width="110.5" height="18.4" fill="#1a73e8"/><rect x="930.5" y="1253.1" width="37.5" height="17.6" fill="#8ab4f8"/><rect x="930.5" y="1275.1" width="27.3" height="18.4" fill="#1a73e8"/><rect x="930.5" y="1295.2" width="11.5" height="17.6" fill="#8ab4f8"/><rect x="930.5" y="1317.0" width="2.6" height="18.4" fill="#1a73e8"/><rect x="930.5" y="1337.1" width="1.3" height="17.6" fill="#8ab4f8"/><rect x="930.5" y="1358.9" width="1.5" height="18.4" fill="#1a73e8"/><rect x="930.5" y="1379.0" width="1.0" height="17.6" fill="#8ab4f8"/><rect x="921" y="1209.35" width="9.5" height="1.5" fill="#dadce0"/><rect x="921" y="1251.05" width="9.5" height="1.5" fill="#dadce0"/><rect x="921" y="1293.35" width="9.5" height="1.5" fill="#dadce0"/><rect x="921" y="1335.25" width="9.5" height="1.5" fill="#dadce0"/><polygon points="1347.3,1139.6 1361.3,1139.6 1354.3,1146.6" fill="#5f6368"/><polygon points="1491.4,1116.2 1503.6,1116.2 1497.5,1122.6" fill="#5f6368"/><circle cx="1459.0" cy="1119.3" r="11.1" fill="none" stroke="#137333" stroke-width="2.3"/>
<polyline points="1452.4,1119.8 1456.8,1124.2 1465.9,1114.8999999999999" fill="none" stroke="#137333" stroke-width="2.5"/></svg>
<div class="t" style="left:780.3px;top:1201.80px;font-size:18.9px;line-height:18.9px;color:#3c4043;-webkit-text-stroke:0.5px #3c4043;">Organic Search</div>
<div class="t" style="left:780.3px;top:1244.10px;font-size:18.9px;line-height:18.9px;color:#3c4043;-webkit-text-stroke:0.5px #3c4043;">Direct</div>
<div class="t" style="left:780.3px;top:1286.20px;font-size:18.9px;line-height:18.9px;color:#3c4043;-webkit-text-stroke:0.5px #3c4043;">Referral</div>
<div class="t" style="left:780.3px;top:1328.00px;font-size:18.9px;line-height:18.9px;color:#3c4043;-webkit-text-stroke:0.5px #3c4043;">Unassigned</div>
<div style="position:absolute;left:1646px;top:201px;width:8px;height:389px;background:#d6d7da;border-radius:4px;border-left:1px solid #c4c5c8;"></div>
</div>
</body></html>
